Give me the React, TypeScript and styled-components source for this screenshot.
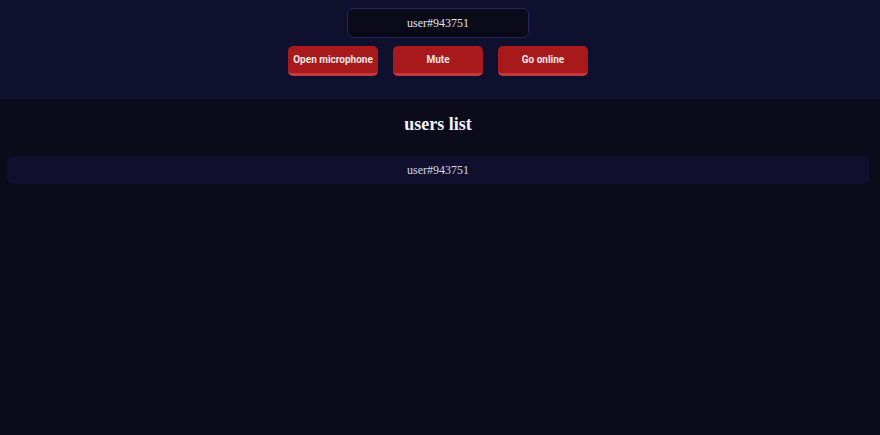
import React from "react";
import styled, { createGlobalStyle } from "styled-components";

const Global = createGlobalStyle`
  html, body { margin: 0; padding: 0; background: #0c0b1a; }
  body { font-family: "Liberation Serif", "Times New Roman", serif; color: #e6e6f2; min-height: 435px; }
`;

const Header = styled.header`
  background: #0f0f2e;
  height: 99px;
  box-sizing: border-box;
  padding: 8px 4px 0 0;
  display: flex;
  flex-direction: column;
  align-items: center;
  gap: 8px;
`;

const NameBox = styled.div`
  width: 182px;
  height: 30px;
  box-sizing: border-box;
  border: 1px solid #25245e;
  border-radius: 6px;
  background: #0b0a18;
  display: flex;
  align-items: center;
  justify-content: center;
  font-size: 12px;
  color: #e4e4f0;
`;

const Toolbar = styled.div`
  display: flex;
  gap: 15px;
`;

const Button = styled.button`
  width: 90px;
  height: 30px;
  box-sizing: border-box;
  border: none;
  border-bottom: 3px solid #c53a3a;
  border-radius: 5px;
  background: #a8191b;
  color: #f3e6e6;
  font-family: Roboto, "Liberation Sans", Arial, sans-serif;
  font-weight: 700;
  font-size: 10px;
  white-space: nowrap;
  padding: 0;
  cursor: pointer;
`;

const Section = styled.section`
  padding: 0 11px 0 7px;
`;

const Title = styled.h2`
  margin: 0;
  padding-top: 15px;
  height: 57px;
  box-sizing: border-box;
  text-align: center;
  font-size: 18px;
  font-weight: bold;
  color: #f2f2fa;
`;

const UserRow = styled.div`
  height: 28px;
  border-radius: 6px;
  background: #10102e;
  display: flex;
  align-items: center;
  justify-content: center;
  font-size: 12px;
  color: #d8d8ea;
`;

export default function App() {
  const user = "user#943751";
  return (
    <>
      <Global />
      <Header>
        <NameBox>{user}</NameBox>
        <Toolbar>
          <Button>Open microphone</Button>
          <Button>Mute</Button>
          <Button>Go online</Button>
        </Toolbar>
      </Header>
      <Section>
        <Title>users list</Title>
        <UserRow>{user}</UserRow>
      </Section>
    </>
  );
}
